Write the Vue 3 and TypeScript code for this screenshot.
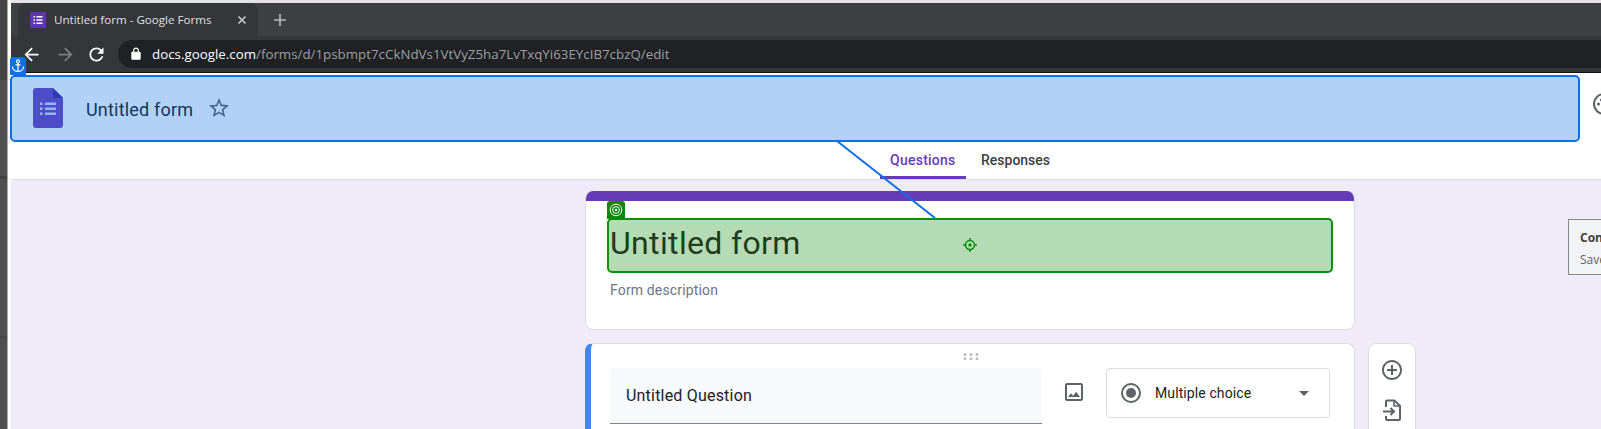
<script setup lang="ts">
const host = "docs.google.com";
const path = "/forms/d/1psbmpt7cCkNdVs1VtVyZ5ha7LvTxqYi63EYcIB7cbzQ/edit";
const formTitle = "Untitled form";
</script>

<template>
  <div class="page">
    <div class="strip"></div>

    <div class="main">
      <div class="top-line"></div>

      <div class="tabbar">
        <div class="tab">
          <svg class="favicon" viewBox="0 0 16 16">
            <rect width="16" height="16" fill="#5e35b1" />
            <path d="M3.5 4h1.6v1.6H3.500zM6.500 4h6v1.600h-6zM3.500 7.200h1.600v1.600H3.500zM6.500 7.200h6v1.600h-6zM3.500 10.400h1.600V12H3.500zM6.500 10.400h6V12h-6z" fill="#fff" />
          </svg>
          <span class="tab-title">Untitled form - Google Forms</span>
          <svg class="tab-close" viewBox="0 0 10 10">
            <path d="M1.500 1.500l7 7M8.500 1.500l-7 7" stroke="#c4c7c9" stroke-width="1.700" fill="none" />
          </svg>
        </div>
        <svg class="tab-plus" viewBox="0 0 12 12">
          <path d="M6 0v12M0 6h12" stroke="#b4b7b9" stroke-width="1.600" fill="none" />
        </svg>
      </div>

      <div class="toolbar">
        <svg class="nav-icon" viewBox="0 0 24 24"><path fill="#fff" d="M20 11H7.830l5.590-5.590L12 4l-8 8 8 8 1.410-1.410L7.830 13H20v-2z" /></svg>
        <svg class="nav-icon" viewBox="0 0 24 24"><path fill="#7c7e80" d="M12 4l-1.410 1.410L16.170 11H4v2h12.170l-5.580 5.590L12 20l8-8z" /></svg>
        <svg class="nav-icon reload" viewBox="0 0 24 24"><path fill="#fff" d="M17.650 6.350C16.200 4.900 14.210 4 12 4c-4.420 0-7.990 3.580-7.990 8s3.570 8 7.990 8c3.730 0 6.840-2.550 7.730-6h-2.080c-.82 2.330-3.040 4-5.650 4-3.310 0-6-2.690-6-6s2.690-6 6-6c1.660 0 3.140.69 4.220 1.780L13 11h7V4l-2.350 2.350z" /></svg>
        <div class="omnibox">
          <svg class="lock" viewBox="0 0 24 24"><path fill="#fff" d="M18 8h-1V6c0-2.760-2.240-5-5-5S7 3.240 7 6v2H6c-1.100 0-2 .9-2 2v10c0 1.100.9 2 2 2h12c1.100 0 2-.9 2-2V10c0-1.100-.9-2-2-2zM9 6c0-1.660 1.340-3 3-3s3 1.340 3 3v2H9V6z" /></svg>
          <span class="url"><span class="url-host">{{ host }}</span>{{ path }}</span>
        </div>
      </div>
      <div class="toolbar-edge"></div>

      <header class="header">
        <div class="header-row">
          <div class="brand">
            <svg class="forms-logo" viewBox="0 0 30 40">
              <path d="M3 0h17l10 10v27a3 3 0 0 1-3 3H3a3 3 0 0 1-3-3V3a3 3 0 0 1 3-3z" fill="#6f42c1" />
              <path d="M20 0l10 10H20z" fill="#3f2a9e" />
              <path d="M7 14.500h2.500V17H7zM12 14.500h11V17H12zM7 19.500h2.500V22H7zM12 19.500h11V22H12zM7 24.500h2.500V27H7zM12 24.500h11V27H12z" fill="#d4d8fa" />
            </svg>
            <span class="form-name">{{ formTitle }}</span>
            <svg class="star" viewBox="0 0 24 24"><path fill="#5f6368" d="M22 9.240l-7.190-.62L12 2 9.190 8.630 2 9.240l5.460 4.730L5.820 21 12 17.270 18.180 21l-1.630-7.030L22 9.240zM12 15.400l-3.760 2.270 1-4.280-3.320-2.880 4.380-.38L12 6.100l1.710 4.040 4.380.38-3.320 2.880 1 4.280L12 15.400z" /></svg>
          </div>
          <svg class="palette" viewBox="0 0 24 24">
            <circle cx="12" cy="12" r="10" fill="none" stroke="#5f6368" stroke-width="2" />
            <circle cx="6.500" cy="12" r="1.500" fill="#5f6368" />
            <circle cx="9.500" cy="8" r="1.500" fill="#5f6368" />
            <circle cx="14.500" cy="8" r="1.500" fill="#5f6368" />
          </svg>
        </div>
        <nav class="tabs">
          <span class="form-tab active">Questions</span>
          <span class="form-tab">Responses</span>
        </nav>
      </header>

      <div class="content">
        <div class="column">
          <section class="card title-card">
            <div class="band"></div>
            <div class="selected">
              <span class="selected-badge">
                <svg viewBox="0 0 14 14" width="14" height="14">
                  <circle cx="7" cy="7" r="5.800" fill="none" stroke="#fff" stroke-width="1" />
                  <circle cx="7" cy="7" r="3.400" fill="none" stroke="#fff" stroke-width="1" />
                  <circle cx="7" cy="7" r="1.300" fill="#fff" />
                </svg>
              </span>
              <span class="big-title">{{ formTitle }}</span>
              <svg class="target" viewBox="0 0 14 14">
                <circle cx="7" cy="7" r="4.500" fill="none" stroke="#0b8a0f" stroke-width="1.500" />
                <circle cx="7" cy="7" r="1.700" fill="#0b8a0f" />
                <path d="M7 0v2.500M7 11.500V14M0 7h2.500M11.500 7H14" stroke="#0b8a0f" stroke-width="1.500" />
              </svg>
            </div>
            <div class="description">Form description</div>
          </section>

          <section class="card question-card">
            <svg class="drag" viewBox="0 0 16 7">
              <g fill="#bdbdbd">
                <circle cx="2" cy="1.500" r="1.500" /><circle cx="8" cy="1.500" r="1.500" /><circle cx="14" cy="1.500" r="1.500" />
                <circle cx="2" cy="5.700" r="1.500" /><circle cx="8" cy="5.700" r="1.500" /><circle cx="14" cy="5.700" r="1.500" />
              </g>
            </svg>
            <div class="question-row">
              <div class="question-input">Untitled Question</div>
              <svg class="image-icon" viewBox="0 0 24 24"><path fill="#5f6368" d="M19 5v14H5V5h14m0-2H5c-1.100 0-2 .9-2 2v14c0 1.100.9 2 2 2h14c1.100 0 2-.9 2-2V5c0-1.100-.9-2-2-2zm-4.860 8.860l-3 3.870L9 13.140 6 17h12l-3.860-5.140z" /></svg>
              <div class="type-select">
                <svg class="radio" viewBox="0 0 20 20">
                  <circle cx="10" cy="10" r="9" fill="none" stroke="#5f6368" stroke-width="2" />
                  <circle cx="10" cy="10" r="5" fill="#5f6368" />
                </svg>
                <span class="type-label">Multiple choice</span>
                <span class="caret"></span>
              </div>
            </div>
          </section>
        </div>

        <aside class="side-tools">
          <svg class="side-icon" viewBox="0 0 24 24"><path fill="#5f6368" d="M13 7h-2v4H7v2h4v4h2v-4h4v-2h-4V7zm-1-5C6.480 2 2 6.480 2 12s4.480 10 10 10 10-4.480 10-10S17.520 2 12 2zm0 18c-4.410 0-8-3.590-8-8s3.590-8 8-8 8 3.590 8 8-3.590 8-8 8z" /></svg>
          <svg class="side-icon" viewBox="0 0 24 24">
            <path d="M6 9V3.500a1 1 0 0 1 1-1h7.500L20 8v13a1 1 0 0 1-1 1H7a1 1 0 0 1-1-1v-3" fill="none" stroke="#5f6368" stroke-width="2" />
            <path d="M14 3v5h5.500" fill="none" stroke="#5f6368" stroke-width="1.600" />
            <path d="M3 13.500h10.500M10.500 10l3.500 3.500-3.500 3.500" fill="none" stroke="#5f6368" stroke-width="2" />
          </svg>
        </aside>

        <div class="hint">
          <strong>Con</strong>
          <span>Save</span>
        </div>
      </div>
    </div>

    <!-- inspector overlays -->
    <div class="anchor-box"></div>
    <span class="anchor-badge">
      <svg viewBox="0 0 14 14" width="14" height="14">
        <circle cx="7" cy="2.400" r="1.500" fill="none" stroke="#fff" stroke-width="1.100" />
        <path d="M7 4v8.500M4.500 5.800h5M1.500 7.500c0 3 2.500 5 5.500 5s5.500-2 5.500-5" fill="none" stroke="#fff" stroke-width="1.200" />
      </svg>
    </span>
    <svg class="link-line" viewBox="0 0 1601 429">
      <line x1="837" y1="141" x2="935" y2="218" stroke="#0e6fe6" stroke-width="2" />
    </svg>
  </div>
</template>

<style scoped>
.page {
  position: relative;
  display: flex;
  width: 1601px;
  height: 429px;
  overflow: hidden;
  background: #fff;
  font-family: Roboto, "Liberation Sans", sans-serif;
}

.strip {
  flex: 0 0 11px;
  background:
    linear-gradient(to right, transparent 0 7px, #a9a9a9 7px 8px, #fff 8px 11px),
    linear-gradient(to bottom, #454545 0 80px, #505050 80px 176px, #404040 176px 179px, #505050 179px 336px, #464646 336px 338px, #505050 338px);
}

.main {
  flex: 1;
  display: flex;
  flex-direction: column;
  min-width: 0;
}

.top-line {
  flex: none;
  height: 3px;
  background: #e4e4e4;
}

.tabbar {
  flex: none;
  display: flex;
  align-items: center;
  height: 33px;
  padding-left: 7px;
  background: #3e4144;
}

.tab {
  display: flex;
  align-items: center;
  width: 240px;
  height: 33px;
  padding: 0 11px 0 12px;
  box-sizing: border-box;
  border-radius: 8px 8px 0 0;
  background: #35363a;
}

.favicon {
  width: 16px;
  height: 16px;
  flex: none;
}

.tab-title {
  margin-left: 8px;
  flex: 1;
  color: #dee1e4;
  font-family: "Open Sans", sans-serif;
  font-size: 11.6px;
  white-space: nowrap;
}

.tab-close {
  width: 10px;
  height: 10px;
}

.tab-plus {
  width: 12px;
  height: 12px;
  margin-left: 16px;
}

.toolbar {
  flex: none;
  display: flex;
  align-items: center;
  height: 36px;
  padding: 4px 0;
  box-sizing: border-box;
  background: #35363a;
}

.nav-icon {
  flex: none;
  width: 21px;
  height: 21px;
  margin-left: 10px;
  margin-right: 3px;
}

.nav-icon.reload {
  margin-left: 7px;
}

.omnibox {
  flex: 1;
  display: flex;
  align-items: center;
  height: 28px;
  margin-left: 8px;
  padding-left: 11px;
  border-radius: 14px 0 0 14px;
  background: #202124;
}

.lock {
  width: 14px;
  height: 14px;
}

.url {
  margin-left: 9px;
  color: #9aa0a6;
  font-family: "Open Sans", sans-serif;
  font-size: 13.33px;
  white-space: nowrap;
}

.url-host {
  color: #fff;
}

.toolbar-edge {
  flex: none;
  height: 1px;
  background: #101010;
}

.header {
  flex: none;
  height: 105px;
  margin-top: 2px;
  box-sizing: border-box;
  border-bottom: 1px solid #dadce0;
  background: #fff;
}

.header-row {
  display: flex;
  align-items: center;
  height: 66px;
}

.brand {
  flex: none;
  width: 1559px;
  margin-left: 22px;
  display: flex;
  align-items: center;
}

.forms-logo {
  width: 30px;
  height: 40px;
}

.form-name {
  margin: 2px 0 0 23px;
  color: #202124;
  font-size: 18px;
  letter-spacing: 0.2px;
}

.star {
  width: 24px;
  height: 24px;
  margin-left: 14px;
}

.palette {
  flex: none;
  width: 24px;
  height: 24px;
  margin-bottom: 9px;
}

.tabs {
  display: flex;
  height: 38px;
  padding-left: 869px;
}

.form-tab {
  display: flex;
  align-items: center;
  padding: 0 16px 0 15px;
  color: #3c4043;
  font-size: 14px;
  font-weight: 500;
}

.form-tab.active {
  width: 86px;
  box-sizing: border-box;
  padding: 3px 0 0 10px;
  border-bottom: 3px solid #673ab7;
  border-radius: 3px 3px 0 0;
  color: #673ab7;
  letter-spacing: 0.25px;
}

.content {
  position: relative;
  flex: 1;
  min-height: 0;
  display: flex;
  align-items: flex-start;
  gap: 13px;
  padding: 11px 0 0 574px;
  background: #f0ebf8;
}

.column {
  flex: none;
  width: 770px;
  display: flex;
  flex-direction: column;
  gap: 13px;
}

.card {
  position: relative;
  flex: none;
  box-sizing: border-box;
  border: 1px solid #dadce0;
  border-radius: 8px;
  background: #fff;
  overflow: hidden;
}

.title-card {
  height: 139px;
  border-top: none;
}

.band {
  height: 10px;
  background: #673ab7;
}

.selected {
  position: relative;
  display: flex;
  align-items: center;
  height: 55px;
  margin: 17px 21px 0;
  padding: 0 0 6px 1px;
  box-sizing: border-box;
  border: 2px solid #0b8f0f;
  border-radius: 5px;
  background: rgba(0, 130, 0, 0.29);
}

.selected-badge {
  position: absolute;
  left: -2px;
  top: -19px;
  display: flex;
  align-items: center;
  justify-content: center;
  width: 18px;
  height: 18px;
  border-radius: 3px 3px 0 0;
  background: #078a07;
}

.big-title {
  color: #1d3d1e;
  font-size: 32px;
  letter-spacing: 0.35px;
}

.target {
  position: absolute;
  left: 354px;
  top: 18px;
  width: 14px;
  height: 14px;
}

.description {
  margin: 9px 0 0 24px;
  color: #70757a;
  font-size: 14px;
  letter-spacing: 0.15px;
}

.question-card {
  height: 120px;
  border-left: 6px solid #4285f4;
}

.drag {
  display: block;
  width: 16px;
  height: 7px;
  margin: 9px 0 0 372px;
}

.question-row {
  display: flex;
  align-items: flex-start;
  margin-top: 8px;
  padding-left: 19px;
}

.question-input {
  width: 432px;
  height: 56px;
  padding: 18px 16px 0;
  box-sizing: border-box;
  border-bottom: 1px solid #80868b;
  border-radius: 4px 4px 0 0;
  background: #f8f9fa;
  color: #202124;
  font-size: 16px;
  letter-spacing: 0.2px;
}

.image-icon {
  flex: none;
  width: 24px;
  height: 24px;
  margin: 12px 0 0 20px;
}

.type-select {
  display: flex;
  align-items: center;
  width: 224px;
  height: 50px;
  margin-left: 20px;
  padding-left: 14px;
  box-sizing: border-box;
  border: 1px solid #dadce0;
  border-radius: 4px;
}

.radio {
  width: 20px;
  height: 20px;
}

.type-label {
  margin-left: 14px;
  color: #202124;
  font-size: 14px;
  letter-spacing: 0.1px;
}

.caret {
  width: 0;
  height: 0;
  margin-left: 48px;
  border: 5px solid transparent;
  border-top-color: #5f6368;
  border-bottom-width: 0;
}

.side-tools {
  flex: none;
  display: flex;
  flex-direction: column;
  align-items: center;
  gap: 16px;
  width: 48px;
  height: 120px;
  margin-top: 152px;
  padding-top: 14px;
  box-sizing: border-box;
  border: 1px solid #dadce0;
  border-radius: 8px;
  background: #fff;
}

.side-icon {
  flex: none;
  width: 24px;
  height: 24px;
}

.hint {
  position: absolute;
  left: 1557px;
  top: 39px;
  display: flex;
  flex-direction: column;
  gap: 5px;
  width: 60px;
  height: 56px;
  padding: 9px 0 0 11px;
  box-sizing: border-box;
  border: 1px solid #888;
  background: #f1f3f4;
  color: #5f6368;
  font-family: "Open Sans", sans-serif;
  font-size: 12px;
}

.hint strong {
  color: #3c4043;
}

.anchor-box {
  position: absolute;
  left: 10px;
  top: 75px;
  width: 1570px;
  height: 67px;
  box-sizing: border-box;
  border: 2px solid #0e6fe6;
  border-radius: 5px;
  background: rgba(0, 102, 225, 0.3);
}

.anchor-badge {
  position: absolute;
  left: 10px;
  top: 57px;
  display: flex;
  align-items: center;
  justify-content: center;
  width: 16px;
  height: 18px;
  border-radius: 3px 3px 0 0;
  background: #0e6fe6;
}

.link-line {
  position: absolute;
  left: 0;
  top: 0;
  width: 1601px;
  height: 429px;
  pointer-events: none;
}
</style>
